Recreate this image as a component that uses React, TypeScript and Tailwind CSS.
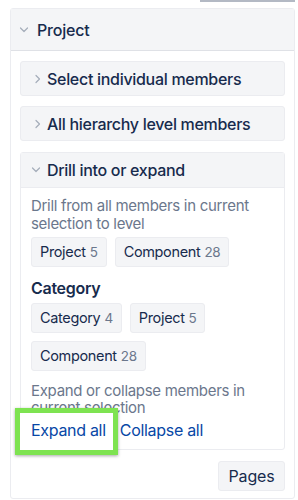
import React from "react";

const ChevronRight = () => (
  <svg width="8" height="10" viewBox="0 0 8 10" className="shrink-0">
    <polyline points="2,1.5 5.5,5 2,8.5" fill="none" stroke="#a5adba" strokeWidth="1.2" strokeLinecap="round" strokeLinejoin="round" />
  </svg>
);

const ChevronDown = () => (
  <svg width="10" height="8" viewBox="0 0 10 8" className="shrink-0">
    <polyline points="1.5,2 5,5.5 8.5,2" fill="none" stroke="#a5adba" strokeWidth="1.2" strokeLinecap="round" strokeLinejoin="round" />
  </svg>
);

const Chip = ({ label, count }: { label: string; count: number }) => (
  <div className="h-[30px] flex items-center gap-[4px] px-[8px] bg-[#f4f5f7] border border-[#ebecf0] rounded-[3px]">
    <span className="text-[14.5px] tracking-[-0.35px] text-[#172b4d]">{label}</span>
    <span className="text-[13.5px] tracking-[-0.3px] text-[#6b778c]">{count}</span>
  </div>
);

export default function App() {
  return (
    <div
      className="w-[298px] h-[500px] bg-white overflow-hidden"
      style={{ fontFamily: "Inter, 'Noto Sans', sans-serif" }}
    >
      <div className="ml-[200px] w-[95px] h-[2px] bg-[#b3b9c4]" />
      <div className="ml-[10px] mt-[6px] w-[285px] h-[491px] border border-[#ebecf0] rounded-[3px] flex flex-col">
        <div className="h-[42px] shrink-0 bg-[#f4f5f7] border-b border-[#dfe1e6] flex items-center pl-[8px] gap-[8px]">
          <ChevronDown />
          <span className="text-[16px] font-medium tracking-[-0.2px] text-[#172b4d]">Project</span>
        </div>
        <div className="px-[9px] pt-[10px] flex flex-col gap-[10px]">
          <div className="h-[35px] bg-[#f4f5f7] border border-[#ebecf0] rounded-[3px] flex items-center pl-[13px] gap-[5px]">
            <ChevronRight />
            <span className="text-[16px] font-medium tracking-[-0.3px] text-[#172b4d]">Select individual members</span>
          </div>
          <div className="h-[35px] bg-[#f4f5f7] border border-[#ebecf0] rounded-[3px] flex items-center pl-[13px] gap-[5px]">
            <ChevronRight />
            <span className="text-[16px] font-medium tracking-[-0.3px] text-[#172b4d]">All hierarchy level members</span>
          </div>
          <div className="mt-[1px] border border-[#ebecf0] rounded-[3px]">
            <div className="h-[35px] bg-[#f4f5f7] border-b border-[#ebecf0] flex items-center pl-[10px] gap-[6px]">
              <ChevronDown />
              <span className="text-[16px] font-medium tracking-[-0.3px] text-[#172b4d]">Drill into or expand</span>
            </div>
            <div className="px-[10px] pt-[9px] pb-[8px]">
              <p className="text-[15px] leading-[18px] tracking-[-0.3px] text-[#6b778c]">
                Drill from all members in current selection to level
              </p>
              <div className="flex flex-wrap gap-[8px] mt-[4px]">
                <Chip label="Project" count={5} />
                <Chip label="Component" count={28} />
              </div>
              <div className="mt-[11px] text-[16px] font-semibold tracking-[-0.3px] text-[#172b4d] leading-[20px]">Category</div>
              <div className="flex flex-wrap gap-[8px] mt-[5px] w-[200px]">
                <Chip label="Category" count={4} />
                <Chip label="Project" count={5} />
                <Chip label="Component" count={28} />
              </div>
              <p className="mt-[11px] text-[15px] leading-[17px] tracking-[-0.3px] text-[#6b778c]">
                Expand or collapse members in current selection
              </p>
              <div className="mt-[3px] flex items-center gap-[14px] text-[16px] leading-[22px] tracking-[-0.3px] text-[#0747a6]">
                <span className="relative">
                  <span className="absolute left-[-16px] top-[-11px] w-[103px] h-[47px] bg-white border-[5px] border-[#7ee351] shadow-[0_1px_3px_rgba(0,0,0,0.35)]" />
                  <span className="relative z-10">Expand all</span>
                </span>
                <span>Collapse all</span>
              </div>
            </div>
          </div>
        </div>
        <div className="flex justify-end px-[9px] mt-[11px]">
          <div className="h-[30px] w-[67px] bg-[#f4f5f7] border border-[#ebecf0] rounded-[3px] flex items-center justify-center text-[16px] tracking-[-0.2px] text-[#172b4d]">
            Pages
          </div>
        </div>
      </div>
    </div>
  );
}
